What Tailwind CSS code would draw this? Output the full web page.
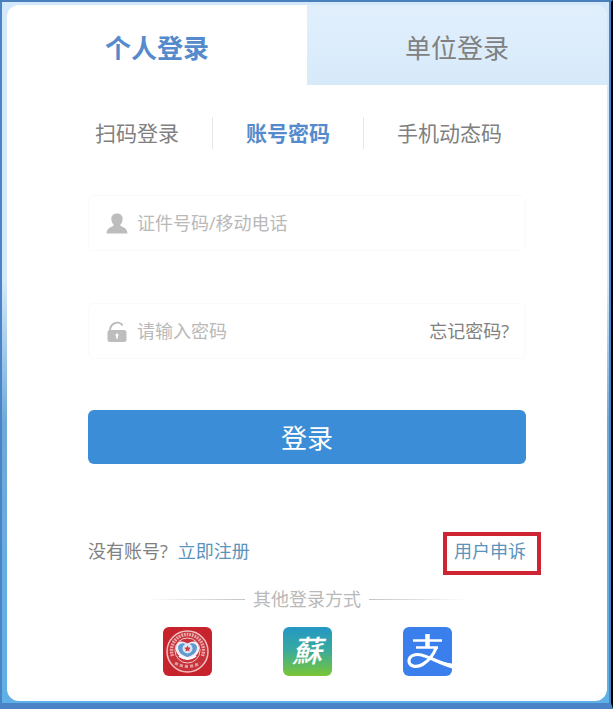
<!DOCTYPE html>
<html lang="zh-CN">
<head>
  <meta charset="UTF-8">
  <meta name="viewport" content="width=device-width, initial-scale=1.0">
  <title>登录</title>
  <script src="https://cdn.jsdelivr.net/npm/@tailwindcss/browser@4"></script>
</head>
<body class="font-['Open_Sans','Noto_Sans_CJK_SC',sans-serif] text-[#808080]">
  <div class="min-h-screen flex flex-col border-t-2 border-r-2 border-b-6 border-t-[#4a7fbd] border-r-black border-b-[#4a83c6] bg-[#4a83c6]">
    <div class="flex-1 flex flex-col ml-[2px] mr-[2px] pt-[3px] pr-[2px] pb-[2px] pl-[5px] bg-linear-to-b from-[#d3e8fa] from-40% via-[#6fa9d8] via-60% to-[#5fb0e6]">
      <main class="flex-1 flex flex-col bg-white rounded-xl overflow-hidden">
        <div class="grid grid-cols-2 h-20 text-[26px] leading-[32px]">
          <button type="button" class="pt-[6px] font-bold text-[#558bcc]">个人登录</button>
          <button type="button" class="pt-[6px] bg-linear-to-b from-[#e1effc] to-[#d7eafa]">单位登录</button>
        </div>

        <form class="px-[81px]" onsubmit="return false">
          <div class="flex items-center gap-[33px] mt-8 h-8 pl-[7px] text-[21px] leading-[32px] whitespace-nowrap">
            <button type="button">扫码登录</button>
            <span class="w-px h-8 bg-[#e6e6e6]"></span>
            <button type="button" class="font-bold text-[#558bcc]">账号密码</button>
            <span class="w-px h-8 bg-[#e6e6e6]"></span>
            <button type="button">手机动态码</button>
          </div>

          <div class="flex items-center gap-2 h-14 mt-[46px] px-4 border border-[#fafafa] rounded-md text-lg">
            <label for="account" class="shrink-0">
              <svg class="size-6" viewBox="0 0 24 24" fill="#bdbdbd" role="img" aria-label="账号">
                <path d="M12 2.500c-4 0-6 2.500-5.600 6 .2 2.300 1 4.200 2.400 5.400-.2 2.200-7 1.300-7.300 8.600h21c-.3-7.300-7.100-6.400-7.300-8.600 1.400-1.200 2.200-3.100 2.400-5.400.4-3.500-1.600-6-5.600-6z"/>
              </svg>
            </label>
            <input id="account" type="text" placeholder="证件号码/移动电话" class="flex-1 min-w-0 outline-none placeholder:text-[#b9b9b9]">
          </div>

          <div class="flex items-center gap-2 h-14 mt-[52px] px-4 border border-[#fafafa] rounded-md text-lg">
            <label for="password" class="shrink-0">
              <svg class="size-6" viewBox="0 0 24 24" role="img" aria-label="密码">
                <path d="M5 12c0-9 10-10.500 12.500-5.500" fill="none" stroke="#bdbdbd" stroke-width="2"/>
                <rect x="2.500" y="11" width="19" height="12" rx="2.500" fill="#bdbdbd"/>
                <path d="M12 14.500a1.600 1.600 0 0 1 .8 2.900v2.400h-1.600v-2.400a1.600 1.600 0 0 1 .8-2.900z" fill="#fff"/>
              </svg>
            </label>
            <input id="password" type="password" placeholder="请输入密码" class="flex-1 min-w-0 outline-none placeholder:text-[#b9b9b9]">
            <a href="#" class="shrink-0">忘记密码?</a>
          </div>

          <button type="submit" class="block w-full h-[54px] mt-[51px] pt-[2px] rounded-md bg-[#3a8dd6] text-white text-[26px] leading-[32px]">登录</button>

          <div class="flex justify-between mt-[73px] text-lg leading-7">
            <p>没有账号?<a href="#" class="ml-[10px] text-[#5a93bb]">立即注册</a></p>
            <div class="relative">
              <a href="#" class="text-[#5a93bb]">用户申诉</a>
              <span class="absolute -top-[5px] -bottom-[10px] -left-[11px] -right-[15px] border-4 border-[#cf2434] pointer-events-none"></span>
            </div>
          </div>

          <div class="flex items-center justify-center gap-2 mt-5 text-lg leading-7 text-[#b9b9b9]">
            <span class="w-25 h-px bg-linear-to-r from-transparent to-[#c4c4c4]"></span>
            <span>其他登录方式</span>
            <span class="w-25 h-px bg-linear-to-l from-transparent to-[#c4c4c4]"></span>
          </div>

          <div class="flex justify-center gap-[71px] mt-[14px] pb-6">
            <a href="#" aria-label="人社登录">
              <svg class="size-[49px]" viewBox="0 0 49 49">
                <rect width="49" height="49" rx="6" fill="#c7232c"/>
                <circle cx="24.500" cy="24.500" r="20.500" fill="#c7323a" stroke="#f0c0c2" stroke-width="1.500"/>
                <path d="M9.500 29a16 16 0 1 1 30 0" fill="none" stroke="#e9a5a8" stroke-width="3.500" stroke-dasharray="1.800 .9"/>
                <path d="M12 36q12.500 7 25 0" fill="none" stroke="#e39a9d" stroke-width="3" stroke-dasharray="3.200 2"/>
                <circle cx="24.500" cy="23.500" r="12.500" fill="#c7323a" stroke="#f3c9cb" stroke-width="1"/>
                <path d="M13 20c1-6 6-7 11.500-3.500C30 13 35 14 36 20c1 6-3 10-11.500 13C16 30 12 26 13 20z" fill="#f2eef4"/>
                <path d="M15 20c1-4 5.500-5 9.500-2 4-3 8.500-2 9.500 2 0 5-3 8-9.500 10-6.500-2-9.500-5-9.500-10z" fill="#609bd0"/>
                <circle cx="24.500" cy="21.500" r="5" fill="#dce6f2"/>
                <path d="M24.500 18.500l1 2 2.200.3-1.600 1.600.4 2.200-2-1-2 1 .4-2.200-1.600-1.600 2.200-.3z" fill="#cf3a45"/>
                <path d="M16 29q8.500 6 17 0" fill="none" stroke="#fff" stroke-width="2"/>
              </svg>
            </a>
            <a href="#" aria-label="苏服办登录">
              <svg class="size-[49px]" viewBox="0 0 49 49">
                <defs>
                  <linearGradient id="green" x1="0" y1="0" x2="0" y2="1">
                    <stop offset="0" stop-color="#2597c5"/>
                    <stop offset=".45" stop-color="#36a9a0"/>
                    <stop offset="1" stop-color="#79c636"/>
                  </linearGradient>
                </defs>
                <rect width="49" height="49" rx="6" fill="url(#green)"/>
                <text x="24" y="35" text-anchor="middle" fill="#fff" font-size="30" font-style="italic" font-weight="500" font-family="'Noto Sans CJK TC', sans-serif">蘇</text>
              </svg>
            </a>
            <a href="#" aria-label="支付宝登录">
              <svg class="size-[49px]" viewBox="0 0 49 49">
                <rect width="49" height="49" rx="6" fill="#3a7fec"/>
                <g fill="none" stroke="#fff">
                  <path d="M24.500 7v13" stroke-width="4.500"/>
                  <path d="M10 13.500h29" stroke-width="2.500"/>
                  <path d="M13 20.500h22" stroke-width="2.500"/>
                  <path d="M33.500 20c-3 8-8 14-14 17.500-6 3.500-13.500 2-13.500-3.500s6.500-7.500 12.500-6c9 2.500 18 8 30.500 11" stroke-width="3.200"/>
                </g>
                <path d="M30 31c6 3 12 4.500 19 5.500v5c-7-2-14-5-20-8.500z" fill="#fff"/>
              </svg>
            </a>
          </div>
        </form>
      </main>
    </div>
  </div>
</body>
</html>
